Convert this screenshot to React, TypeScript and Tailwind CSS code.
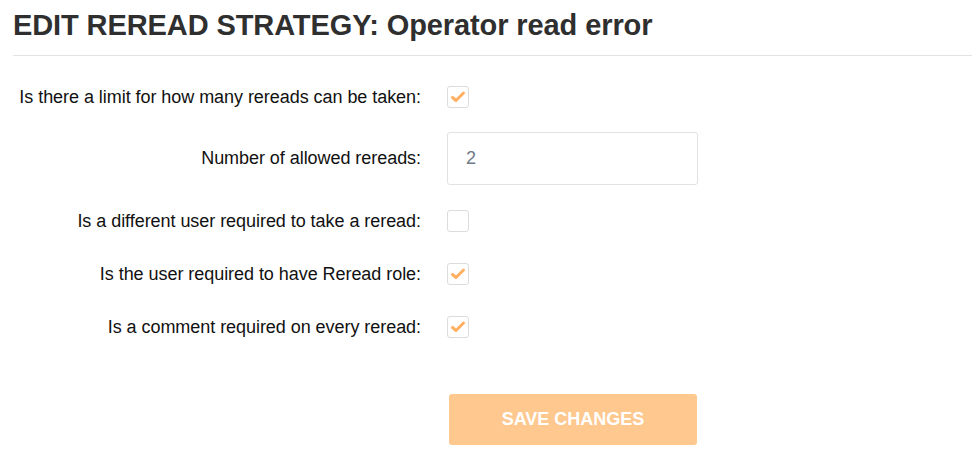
import React, { useState } from "react";

/**
 * App — Reread strategy edit form.
 * Labels are right-aligned in a fixed column; controls sit in the second column.
 */

const font = { fontFamily: '"Liberation Sans", Arial, sans-serif' };

function Check({ checked, onChange }: { checked: boolean; onChange: () => void }) {
  return (
    <button
      type="button"
      onClick={onChange}
      className="w-[22px] h-[22px] rounded-[3px] border border-[#dcdcdc] bg-white flex items-center justify-center"
    >
      {checked && (
        <svg width="16" height="14" viewBox="0 0 16 14" fill="none">
          <path
            d="M2.5 7.5 L6 10.5 L13.5 3"
            stroke="#ffb060"
            strokeWidth="3"
            strokeLinecap="round"
            strokeLinejoin="round"
          />
        </svg>
      )}
    </button>
  );
}

function Row({ label, children, h }: { label: string; children: React.ReactNode; h: string }) {
  return (
    <div className={`flex items-center ${h}`}>
      <label className="w-[421px] text-right text-[18px] text-[#111] tracking-[-0.05px] shrink-0">{label}</label>
      <div className="pl-[26px] flex items-center">{children}</div>
    </div>
  );
}

export default function App() {
  const [limit, setLimit] = useState(true);
  const [diffUser, setDiffUser] = useState(false);
  const [role, setRole] = useState(true);
  const [comment, setComment] = useState(true);
  const [count, setCount] = useState("2");

  return (
    <div className="w-[972px] h-[471px] bg-white" style={font}>
      <h1 className="pl-[13px] pt-[9px] pb-[13px] text-[29px] font-bold text-[#2f2f2f] leading-[33px] tracking-[-0.1px]">
        EDIT REREAD STRATEGY: Operator read error
      </h1>
      <div className="ml-[13px] border-t border-[#e3e3e3]" />

      <div className="pt-[30px] flex flex-col">
        <Row label="Is there a limit for how many rereads can be taken:" h="h-[22px]">
          <Check checked={limit} onChange={() => setLimit(!limit)} />
        </Row>
        <div className="mt-[24px]">
          <Row label="Number of allowed rereads:" h="h-[53px]">
            <input
              value={count}
              onChange={(e) => setCount(e.target.value)}
              className="w-[251px] h-[53px] rounded-[3px] border border-[#e2e2e2] px-[18px] text-[18px] text-[#6f7a85] outline-none"
            />
          </Row>
        </div>
        <div className="mt-[25px]">
          <Row label="Is a different user required to take a reread:" h="h-[22px]">
            <Check checked={diffUser} onChange={() => setDiffUser(!diffUser)} />
          </Row>
        </div>
        <div className="mt-[31px]">
          <Row label="Is the user required to have Reread role:" h="h-[22px]">
            <Check checked={role} onChange={() => setRole(!role)} />
          </Row>
        </div>
        <div className="mt-[31px]">
          <Row label="Is a comment required on every reread:" h="h-[22px]">
            <Check checked={comment} onChange={() => setComment(!comment)} />
          </Row>
        </div>
        <div className="pl-[449px] mt-[56px]">
          <button
            type="button"
            className="w-[248px] h-[51px] rounded-[3px] bg-[#fec88f] text-white font-bold text-[18px]"
          >
            SAVE CHANGES
          </button>
        </div>
      </div>
    </div>
  );
}
